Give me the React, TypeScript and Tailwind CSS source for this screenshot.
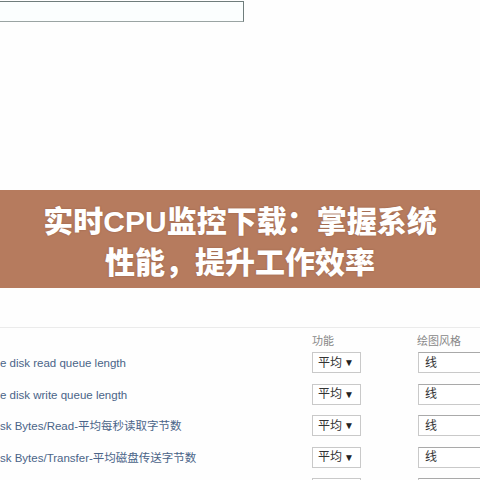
import React from 'react'

const rows = [
  'e disk read queue length',
  'e disk write queue length',
  'sk Bytes/Read-平均每秒读取字节数',
  'sk Bytes/Transfer-平均磁盘传送字节数',
]

const font = { fontFamily: '"Liberation Sans", "Noto Sans CJK SC", sans-serif' }

function Select({ empty }: { empty?: boolean }) {
  return (
    <div className="flex h-[21px] w-[49px] shrink-0 items-center justify-between border border-[#c9c9c9] bg-white pl-[5px] pr-[6px] text-[12px] text-[#333]">
      {!empty && (
        <>
          <span>平均</span>
          <span className="text-[10px] text-[#222]">▼</span>
        </>
      )}
    </div>
  )
}

function StyleInput({ empty }: { empty?: boolean }) {
  return (
    <div className="flex h-[21px] w-[80px] shrink-0 items-center border border-[#c9c9c9] border-t-[#a9a9a9] bg-white pl-[6px] text-[12px] text-[#333]">
      {!empty && '线'}
    </div>
  )
}

export default function App() {
  return (
    <div className="h-[480px] w-[480px] overflow-hidden bg-[#fefefe]" style={font}>
      <div className="h-[190px] pt-px">
        <div className="h-[21px] w-[244px] border border-[#6f7d7c] border-b-[#9aa4a3] border-l-0 bg-[#fbfefe]" />
      </div>

      <div className="flex h-[98px] flex-col items-center justify-center bg-[#b67b5e] pt-[6px] text-[30px] font-black leading-[41px] text-white [text-shadow:0_0_2px_rgba(90,50,30,0.35)]">
        <div>实时CPU监控下载：掌握系统</div>
        <div>性能，提升工作效率</div>
      </div>

      <div className="h-[40px] border-b border-[#ebebeb]" />

      <div className="flex h-[20px] items-end text-[11px] leading-[14px] text-[#888]">
        <span className="ml-[312px] w-[105px] shrink-0">功能</span>
        <span>绘图风格</span>
      </div>

      <div className="flex flex-col pt-[4px]">
        {rows.map((r) => (
          <div key={r} className="flex h-[31.5px] items-start">
            <span className="mt-[1px] w-[312px] shrink-0 whitespace-nowrap text-[11.5px] leading-[20px] text-[#4a6488]">{r}</span>
            <div className="w-[106px] shrink-0">
              <Select />
            </div>
            <StyleInput />
          </div>
        ))}
        <div className="flex h-[31.5px] items-start">
          <div className="ml-[312px] w-[106px] shrink-0">
            <Select empty />
          </div>
          <StyleInput empty />
        </div>
      </div>
    </div>
  )
}
